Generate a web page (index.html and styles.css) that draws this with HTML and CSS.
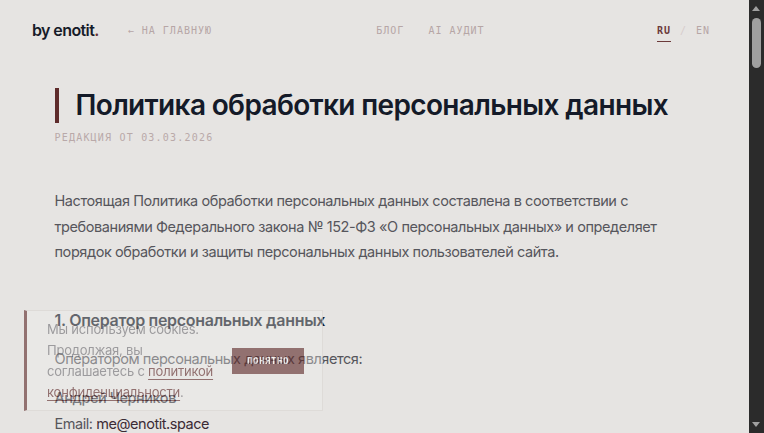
FILE: index.html
```html
<!DOCTYPE html>
<html lang="ru">

<head>
  <meta charset="UTF-8">
  <meta name="viewport" content="width=device-width, initial-scale=1.0">
  <title>Политика обработки персональных данных — by enotit.</title>
  <link rel="stylesheet" href="styles.css">
</head>

<body>
  <header class="site-header">
    <div class="header-left">
      <a href="#" class="logo">by enotit<span class="dot">.</span></a>
      <a href="#" class="back">← На главную</a>
    </div>
    <nav class="header-nav">
      <a href="#">Блог</a>
      <a href="#">AI Аудит</a>
    </nav>
    <div class="lang">
      <a href="#" class="active">RU</a>
      <span class="sep">/</span>
      <a href="#">EN</a>
    </div>
  </header>

  <main class="page">
    <h1 class="title">Политика обработки персональных данных</h1>
    <div class="revision">Редакция от 03.03.2026</div>

    <p class="lead">Настоящая Политика обработки персональных данных составлена в соответствии с требованиями Федерального закона № 152-ФЗ «О персональных данных» и определяет порядок обработки и защиты персональных данных пользователей сайта.</p>

    <section class="block">
      <h2>1. Оператор персональных данных</h2>
      <p>Оператором персональных данных является:</p>
      <p class="name">Андрей Черников</p>
      <p class="contact">Email: <a href="#">me@enotit.space</a></p>
    </section>

    <section class="block">
      <h2>2. Какие данные собираются</h2>
      <p>Сайт может собирать следующие данные: имя, адрес электронной почты, номер телефона, а также сведения, которые пользователь добровольно указывает в формах обратной связи.</p>
      <p>Автоматически собираются технические данные: IP-адрес, тип браузера, cookies, сведения о посещённых страницах.</p>
    </section>

    <section class="block">
      <h2>3. Цели обработки</h2>
      <p>Персональные данные обрабатываются для ответа на обращения, оказания услуг, улучшения работы сайта и ведения статистики посещений.</p>
    </section>

    <section class="block">
      <h2>4. Правовые основания</h2>
      <p>Обработка осуществляется на основании согласия пользователя, выраженного путём отправки формы на сайте или продолжения использования сайта.</p>
    </section>

    <section class="block">
      <h2>5. Хранение и защита данных</h2>
      <p>Оператор принимает необходимые организационные и технические меры для защиты персональных данных от неправомерного доступа, уничтожения, изменения и распространения.</p>
      <p>Данные хранятся не дольше, чем этого требуют цели обработки.</p>
    </section>

    <section class="block">
      <h2>6. Передача третьим лицам</h2>
      <p>Персональные данные не передаются третьим лицам, за исключением случаев, предусмотренных законодательством Российской Федерации.</p>
    </section>

    <section class="block">
      <h2>7. Cookies</h2>
      <p>Сайт использует cookies для корректной работы и аналитики. Пользователь может отключить cookies в настройках браузера, однако часть функций сайта может стать недоступной.</p>
    </section>

    <section class="block">
      <h2>8. Права пользователя</h2>
      <p>Пользователь вправе получить сведения об обработке своих данных, потребовать их уточнения, блокирования или уничтожения, а также отозвать согласие на обработку, направив запрос на me@enotit.space.</p>
    </section>

    <section class="block">
      <h2>9. Изменение политики</h2>
      <p>Оператор вправе вносить изменения в настоящую Политику. Новая редакция вступает в силу с момента её размещения на сайте.</p>
    </section>
  </main>

  <footer class="site-footer">
    <span>© 2026 by enotit.</span>
  </footer>

  <div class="cookie">
    <p class="cookie-text">Мы используем cookies. Продолжая, вы соглашаетесь с <a href="#">политикой конфиденциальности</a>.</p>
    <button type="button" class="cookie-btn">Понятно</button>
  </div>

  <!-- browser scrollbar as seen in the screenshot -->
  <div class="scrollbar" aria-hidden="true">
    <span class="arrow up"></span>
    <span class="thumb"></span>
    <span class="arrow down"></span>
  </div>
</body>

</html>
```

FILE: styles.css
```css
html {
  background: #e6e4e2;
}

body {
  margin: 0;
  padding-right: 15px;
  background: #e6e4e2;
  color: #56565c;
  font-family: Inter, 'Noto Sans', sans-serif;
}

a {
  color: inherit;
  text-decoration: none;
}

.site-header {
  display: flex;
  justify-content: space-between;
  align-items: center;
  height: 60px;
  padding: 0 39px 0 32px;
}

.header-left {
  display: flex;
  align-items: center;
  gap: 29px;
}

.logo {
  font-size: 16px;
  font-weight: 600;
  letter-spacing: -0.6px;
  color: #161b29;
}

.logo .dot {
  color: #6b3535;
}

.back,
.header-nav a,
.lang a,
.lang .sep {
  font-family: 'DejaVu Sans Mono', monospace;
  font-size: 10px;
  letter-spacing: 1px;
  text-transform: uppercase;
  color: #b6a6a6;
}

.header-nav {
  display: flex;
  gap: 24px;
  margin-right: 8px;
}

.lang {
  display: flex;
  gap: 9px;
}

.lang .sep {
  color: #d6cccc;
}

.lang a.active {
  color: #6b3a3a;
  font-weight: bold;
  padding-bottom: 5px;
  border-bottom: 1px solid #6b3a3a;
  margin-bottom: -6px;
}

.page {
  max-width: 640px;
  margin: 0 auto;
  padding: 28px 0 60px;
}

.title {
  margin: 0;
  padding-left: 17px;
  border-left: 4px solid #5e2b2b;
  font-size: 28px;
  line-height: 35px;
  font-weight: 600;
  letter-spacing: -0.65px;
  color: #141a28;
}

.revision {
  margin-top: 9px;
  font-family: 'DejaVu Sans Mono', monospace;
  font-size: 10px;
  letter-spacing: 1.2px;
  text-transform: uppercase;
  color: #b9a9a9;
}

.lead {
  margin: 45px 0 0;
  font-size: 14.5px;
  line-height: 25.5px;
  letter-spacing: -0.42px;
}

.block {
  margin-top: 43px;
}

.block h2 {
  margin: 0 0 14px;
  font-size: 16px;
  line-height: 24px;
  font-weight: 600;
  letter-spacing: -0.3px;
  color: #1a1f2c;
}

.block p {
  margin: 0 0 14px;
  font-size: 14.5px;
  line-height: 25.5px;
  letter-spacing: -0.45px;
}

.block p.name {
  margin-bottom: 0;
  font-weight: 500;
  color: #3d3f48;
}

.block p.contact a {
  color: #3b2b35;
}

.site-footer {
  max-width: 640px;
  margin: 0 auto;
  padding: 30px 0 40px;
  font-family: 'DejaVu Sans Mono', monospace;
  font-size: 10px;
  letter-spacing: 1px;
  color: #b6a6a6;
}

.cookie {
  position: fixed;
  left: 24px;
  bottom: 22px;
  box-sizing: border-box;
  width: 299px;
  height: 101px;
  display: flex;
  align-items: center;
  gap: 16px;
  padding: 0 18px 0 20px;
  background: rgba(240, 238, 236, 0.55);
  border: 1px solid #d9d5d2;
  border-left: 3px solid #5e2b2b;
  opacity: 0.62;
}

.cookie-text {
  margin: 0;
  width: 170px;
  font-size: 13px;
  line-height: 21px;
  letter-spacing: -0.2px;
  color: #6f6f74;
}

.cookie-text a {
  color: #5e2b2b;
  text-decoration: underline;
  text-decoration-color: #5e2b2b;
  text-underline-offset: 3px;
}

.cookie-btn {
  flex-shrink: 0;
  width: 72px;
  height: 26px;
  border: none;
  background: #5e2b2b;
  color: #fff;
  font-family: 'DejaVu Sans Mono', monospace;
  font-size: 9px;
  font-weight: bold;
  letter-spacing: 0.6px;
  text-transform: uppercase;
  cursor: pointer;
}

.scrollbar {
  position: fixed;
  top: 0;
  right: 0;
  width: 15px;
  height: 100vh;
  background: #2b2b2b;
}

.scrollbar .thumb {
  position: absolute;
  top: 18px;
  left: 3px;
  width: 9px;
  height: 50px;
  border-radius: 5px;
  background: #a0a0a0;
}

.scrollbar .arrow {
  position: absolute;
  left: 3px;
  width: 0;
  height: 0;
  border-left: 4.5px solid transparent;
  border-right: 4.5px solid transparent;
}

.scrollbar .arrow.up {
  top: 6px;
  border-bottom: 5px solid #a0a0a0;
}

.scrollbar .arrow.down {
  bottom: 6px;
  border-top: 5px solid #a0a0a0;
}
```
